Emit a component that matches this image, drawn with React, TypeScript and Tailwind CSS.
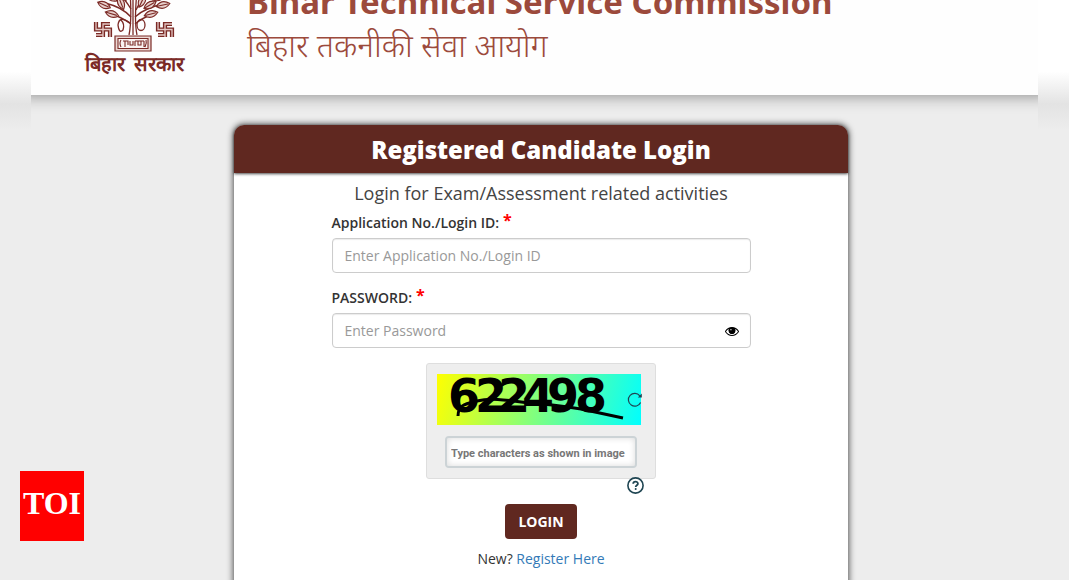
import { useState } from "react";
import type { ReactNode } from "react";

// x offset of every captcha digit, they overlap on purpose
const CAPTCHA = [
  { digit: "6", x: 11 },
  { digit: "2", x: 38 },
  { digit: "2", x: 61 },
  { digit: "4", x: 85 },
  { digit: "9", x: 110 },
  { digit: "8", x: 138 },
];

// Leaves of the tree: position and rotation of each one
const LEAVES = [
  { x: 104, y: 6, r: 24 },
  { x: 112, y: 15, r: 16 },
  { x: 111, y: -2, r: 35 },
  { x: 121, y: 4, r: 68 },
  { x: 124, y: -5, r: 75 },
  { x: 142, y: 2, r: -64 },
  { x: 151, y: 15, r: -14 },
  { x: 150, y: 6, r: -30 },
  { x: 163, y: 6, r: -12 },
  { x: 159, y: -2, r: -25 },
];

export default function App() {
  return (
    <div className="min-h-screen bg-[#ededed] font-['Open_Sans',sans-serif] text-[#333]">
      <div className="flex h-screen overflow-hidden">
        <SideStrip />
        <div className="min-w-0 flex-1">
          <Header />
          <main className="flex justify-center pt-[30px] pl-[13px]">
            <LoginCard />
          </main>
        </div>
        <SideStrip />
      </div>

      <div className="fixed bottom-[39px] left-5 flex h-[70px] w-16 items-center justify-center bg-[#ff0000] pb-[6px] font-['Liberation_Serif',serif] text-[32px] font-bold text-white">
        TOI
      </div>
    </div>
  );
}

function SideStrip() {
  return (
    <div className="w-[31px] shrink-0 bg-[#ededed]">
      <div className="h-[130px] bg-linear-to-b from-white from-55% via-[#e3e3e3] via-80% to-[#ededed]" />
    </div>
  );
}

function Header() {
  return (
    <header className="flex h-[95px] items-end bg-[#fefefe] pl-[50px] shadow-[0_-12px_16px_12px_rgba(0,0,0,0.45)] [clip-path:inset(0_0_-30px_0)]">
      <div className="flex w-[106px] flex-col items-center pb-[19px] text-[#7b2a26]">
        <Emblem />
        <p className="flex gap-[9px] text-xl leading-6 font-bold whitespace-nowrap">
          <span>बिहार</span>
          <span>सरकार</span>
        </p>
      </div>
      <div className="pb-7 pl-[60px] whitespace-nowrap text-[#9c4a3c]">
        <h1 className="font-['Noto_Sans',sans-serif] text-[33px] leading-[42px] font-bold">Bihar Technical Service Commission</h1>
        <p className="font-['Noto_Sans',sans-serif] text-[32px] leading-[44px] font-light">बिहार तकनीकी सेवा आयोग</p>
      </div>
    </header>
  );
}

function LoginCard() {
  const [showPassword, setShowPassword] = useState(false);

  return (
    <section className="h-[520px] w-full max-w-[614px] rounded-t-[10px] bg-white shadow-[0_0_6px_1px_rgba(0,0,0,0.65)]">
      <h2 className="rounded-t-[10px] bg-[#602820] pt-[9px] pb-[7px] text-center text-2xl leading-8 font-extrabold text-white shadow-[0_1px_3px_rgba(0,0,0,0.7)]">
        Registered Candidate Login
      </h2>
      <form className="mx-auto flex max-w-[419px] flex-col items-center pt-2" onSubmit={(e) => e.preventDefault()}>
        <p className="text-lg leading-6 text-[#444]">Login for Exam/Assessment related activities</p>

        <div className="mt-2 flex w-full flex-col gap-[15px]">
          <Field id="login-id" label="Application No./Login ID:">
            <input
              id="login-id"
              type="text"
              placeholder="Enter Application No./Login ID"
              className="block h-[35px] w-full rounded-sm border border-[#ccc] bg-white px-3 text-sm shadow-[inset_0_1px_1px_rgba(0,0,0,0.08)] placeholder:text-[#999]"
            />
          </Field>
          <Field id="password" label="PASSWORD:">
            <input
              id="password"
              type={showPassword ? "text" : "password"}
              placeholder="Enter Password"
              className="block h-[35px] w-full rounded-sm border border-[#ccc] bg-white px-3 pr-10 text-sm shadow-[inset_0_1px_1px_rgba(0,0,0,0.08)] placeholder:text-[#999]"
            />
            <button
              type="button"
              aria-label="Show password"
              onClick={() => setShowPassword(!showPassword)}
              className="absolute right-3 bottom-[10px] text-black"
            >
              <EyeIcon />
            </button>
          </Field>
        </div>

        <Captcha />

        <div className="flex w-[230px] justify-end pr-3">
          <button type="button" aria-label="Help" className="-mt-[2px]">
            <HelpIcon />
          </button>
        </div>

        <button type="submit" className="mt-[10px] h-[35px] rounded-sm bg-[#602820] px-[13px] text-sm font-bold text-white">
          LOGIN
        </button>
        <p className="mt-[10px] text-sm leading-5">
          New?{" "}
          <a href="#register" className="text-[#337ab7]">
            Register Here
          </a>
        </p>
      </form>
    </section>
  );
}

function Field({ id, label, children }: { id: string; label: string; children: ReactNode }) {
  return (
    <div className="relative">
      <label htmlFor={id} className="mb-[5px] flex text-sm leading-5 font-semibold">
        {label}
        <span className="-mt-[3px] ml-1 text-base leading-5 font-bold text-[#ff0000]">*</span>
      </label>
      {children}
    </div>
  );
}

function Captcha() {
  return (
    <div className="mt-[15px] w-[230px] rounded-[3px] border border-[#dedede] bg-[#eee] p-[10px]">
      <div className="relative w-[204px] bg-[linear-gradient(105deg,#ffff00,#00ffff)]">
        <svg viewBox="0 0 204 51" className="block h-[51px] w-[204px]" role="img" aria-label="Captcha">
          {CAPTCHA.map((c, i) => (
            <text key={i} x={c.x} y="38" fontSize="46" fontWeight="700" fontFamily="DejaVu Sans, sans-serif">
              {c.digit}
            </text>
          ))}
          <path d="M21 42C21 31 28 30 40 27C56 23 75 27 92 29C112 30 125 32 144 35L186 44" fill="none" stroke="#000" strokeWidth="3" />
        </svg>
        <button type="button" aria-label="Reload captcha" className="absolute top-[18px] -right-[2px]">
          <svg viewBox="0 0 16 16" className="block size-4" fill="none" stroke="#1f4552" strokeWidth="1.2">
            <path d="M13.6 10.5A6.4 6.4 0 1 1 12.8 3.8" />
            <path d="M14.8 1.5V5.6H10.8Z" fill="#1f4552" stroke="none" />
          </svg>
        </button>
      </div>
      <input
        type="text"
        aria-label="Captcha text"
        placeholder="Type characters as shown in image"
        className="mx-2 mt-[11px] block h-8 w-48 rounded-sm border-2 border-[#ccd3d6] bg-white px-1 pt-[2px] font-['Roboto',sans-serif] text-[11px] font-bold shadow-[inset_0_0_6px_rgba(0,0,0,0.15)] placeholder:text-[#777]"
      />
    </div>
  );
}

function EyeIcon() {
  return (
    <svg viewBox="0 0 1792 1792" className="block size-[14px]" fill="currentColor">
      <path d="M1664 960q-152-236-381-353 61 104 61 225 0 185-131.5 316.5t-316.5 131.5-316.5-131.5-131.5-316.5q0-121 61-225-229 117-381 353 133 205 333.5 326.5t434.5 121.5 434.5-121.5 333.5-326.5zm-720-384q0-20-14-34t-34-14q-125 0-214.5 89.5t-89.5 214.5q0 20 14 34t34 14 34-14 14-34q0-86 61-147t147-61q20 0 34-14t14-34zm848 384q0 34-20 69-140 230-376.5 368.5t-499.5 138.5-499.5-139-376.5-368q-20-35-20-69t20-69q140-229 376.5-368t499.5-139 499.5 139 376.5 368q20 35 20 69z" />
      <circle cx="896" cy="850" r="400" />
      <circle cx="760" cy="720" r="90" fill="#fff" />
    </svg>
  );
}

function HelpIcon() {
  return (
    <svg viewBox="0 0 17 17" className="block size-[17px]">
      <circle cx="8.5" cy="8.5" r="7.6" fill="#fff" stroke="#1f4552" strokeWidth="1.6" />
      <path d="M6.2 6.8C6.2 3.9 10.9 3.9 10.9 6.7C10.9 8.2 8.7 8.3 8.7 10" fill="none" stroke="#1f4552" strokeWidth="1.8" />
      <circle cx="8.7" cy="12" r="1" fill="#1f4552" />
    </svg>
  );
}

function SideMark({ x }: { x: number }) {
  const d = "M2 0V7.500H16V15M9 15V2H16M2 13H9";
  return (
    <g transform={`translate(${x} 23)`}>
      <path d={d} strokeWidth="4.2" />
      <path d={d} stroke="#e4c8c4" strokeWidth="1.3" />
    </g>
  );
}

function Emblem() {
  return (
    <svg viewBox="90 -8 88 61" className="block h-[61px] w-[88px] shrink-0" fill="none" stroke="currentColor">
      {/* Trunk and branches */}
      <path d="M129 36Q132 22 130 -8M137 36Q134 22 137 -8M133 36V-8" strokeWidth="1.3" />
      <path d="M131 25Q122 18 108 14M131 18Q122 8 105 4M131 10Q126 2 120 -5M135 25Q142 19 155 14M135 18Q146 8 164 5M136 11Q139 5 145 -5" strokeWidth="1.4" />
      {LEAVES.map((l, i) => (
        <g key={i} transform={`translate(${l.x} ${l.y}) rotate(${l.r})`}>
          <path d="M-7 0Q0 -6.500 7 0Q0 6.500 -7 0ZM-6 0H5" fill="#e8d0cc" strokeWidth="1.1" />
        </g>
      ))}
      {/* Hanging loops */}
      <path d="M130 24Q119 16 118 26Q119 35 123 31Q125 25 121 21" strokeWidth="1.3" />
      <ellipse cx="141" cy="26" rx="4" ry="5.500" strokeWidth="1.3" />
      <SideMark x={94} />
      <SideMark x={156} />
      {/* Plinth */}
      <path d="M115 37H151V52H115Z" fill="#ecd8d4" strokeWidth="1.2" />
      <path d="M118 39.500H148V49.500H118Z" fill="#faf3f2" strokeWidth="1.1" />
      <path d="M121 41Q119 44 121 48M123 42H128V46M125 42V48M130 42V46H133V42M135 42H144M135 42V47M138 42V46H141V42M144 42V48M146 41Q147 44 145 48" strokeWidth="1.1" />
    </svg>
  );
}
